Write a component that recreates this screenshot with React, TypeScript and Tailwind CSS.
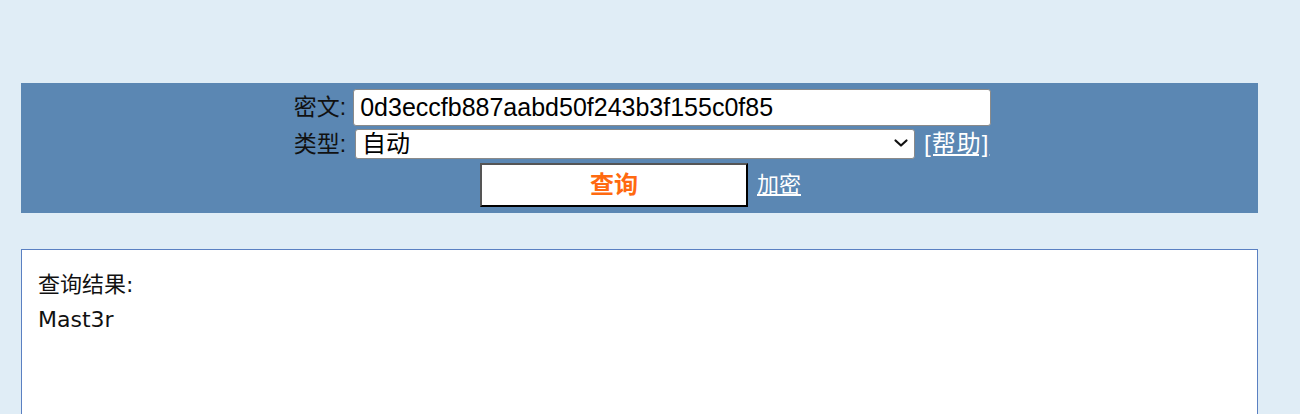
import React from "react";

const ChevronDown: React.FC = () => (
  <svg
    width="18"
    height="18"
    viewBox="0 0 18 18"
    fill="none"
    stroke="#111"
    strokeWidth="2.2"
    strokeLinecap="round"
    strokeLinejoin="round"
  >
    <path d="M3.5 6.5l5.5 5 5.5-5" />
  </svg>
);

const labelFont = {
  fontFamily: '"Liberation Sans", "Noto Sans CJK SC", sans-serif',
};

export default function App() {
  return (
    <div
      className="h-[414px] w-full bg-[#e0edf6] pt-[83px] overflow-hidden"
      style={labelFont}
    >
      {/* Query panel */}
      <div className="ml-[21px] w-[1237px] bg-[#5b87b3] py-[6px] flex flex-col items-center">
        <div className="flex items-center justify-center h-[37px] translate-x-[3px]">
          <span className="text-[23px] text-[#111] pr-[7px] leading-none">
            密文:
          </span>
          <input
            className="w-[638px] h-[37px] bg-white rounded-[3px] border border-[#8a8a8a] px-[6px] text-[25px] text-black outline-none"
            defaultValue="0d3eccfb887aabd50f243b3f155c0f85"
          />
        </div>

        <div className="flex items-center justify-center h-[30px] mt-[3px] translate-x-[2px]">
          <span className="text-[23px] text-[#111] pr-[9px] leading-none">
            类型:
          </span>
          <div className="relative">
            <select
              className="w-[560px] h-[30px] bg-white rounded-[3px] border border-[#8a8a8a] pl-[6px] text-[24px] text-black appearance-none outline-none leading-none"
              defaultValue="auto"
            >
              <option value="auto">自动</option>
            </select>
            <div className="absolute right-[5px] top-[5px] pointer-events-none">
              <ChevronDown />
            </div>
          </div>
          <a
            href="#"
            className="ml-[9px] text-[24px] text-white underline leading-none tracking-[1px]"
          >
            [帮助]
          </a>
        </div>

        <div className="flex items-center justify-center mt-[4px] translate-x-[1px]">
          <button className="w-[268px] h-[44px] bg-white border-2 border-t-[#555] border-l-[#555] border-b-black border-r-black text-[24px] font-bold text-[#ff6a10]">
            查询
          </button>
          <a href="#" className="ml-[9px] text-[22px] text-white underline leading-none">
            加密
          </a>
        </div>
      </div>

      {/* Result */}
      <div
        className="ml-[21px] mt-[36px] w-[1237px] h-[200px] bg-white border border-[#5a80c2] px-[16px] pt-[17px] text-[22px] text-[#111] leading-[35px]"
        style={{ fontFamily: '"DejaVu Sans", "Noto Sans CJK SC", sans-serif' }}
      >
        <div>查询结果:</div>
        <div>Mast3r</div>
      </div>
    </div>
  );
}
